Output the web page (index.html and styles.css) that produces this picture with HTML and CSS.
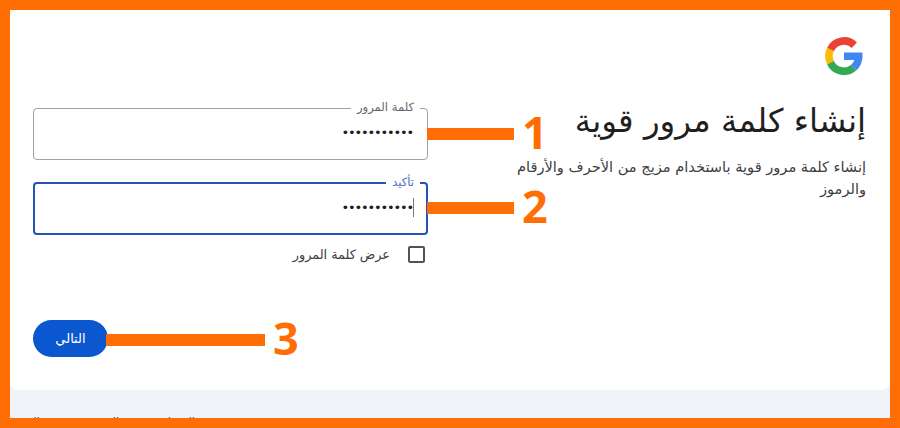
FILE: index.html
```
<!DOCTYPE html>
<html lang="ar" dir="rtl">
<head>
<meta charset="utf-8">
<title>إنشاء كلمة مرور قوية</title>
<link rel="stylesheet" href="styles.css">
</head>
<body>
<div class="frame">
  <main class="card">
    <section class="intro">
      <svg class="logo" viewBox="0 0 38 38" fill="none" stroke-width="7.6" aria-hidden="true">
        <path stroke="#4285f4" d="M19 19.2H33.7A14.8 14.8 0 0 1 28.6 30.6"/>
        <path stroke="#34a853" d="M5.3 25.2A14.8 14.8 0 0 0 28.6 30.6"/>
        <path stroke="#fbbc05" d="M5.6 12.3A15 15 0 0 0 5.6 25.7"/>
        <path stroke="#ea4335" d="M29.3 8.2A14.8 14.8 0 0 0 5.6 12.3"/>
      </svg>
      <h1 class="title">إنشاء كلمة مرور قوية</h1>
      <p class="lead">إنشاء كلمة مرور قوية باستخدام مزيج من الأحرف والأرقام والرموز</p>
    </section>
    <form class="form">
      <fieldset class="field">
        <legend>كلمة المرور</legend>
        <span class="dots">•••••••••••</span>
      </fieldset>
      <fieldset class="field focused">
        <legend>تأكيد</legend>
        <span class="caret"></span><span class="dots">•••••••••••</span>
      </fieldset>
      <label class="show"><span class="box"></span><span>عرض كلمة المرور</span></label>
      <button class="next" type="button">التالي</button>
    </form>
  </main>
  <footer class="footer">
    <span class="language">العربية</span>
    <nav class="links"><span>المساعدة</span><span>الخصوصية</span><span>البنود</span></nav>
  </footer>
  <div class="callout one"><i></i><b>1</b></div>
  <div class="callout two"><i></i><b>2</b></div>
  <div class="callout three"><i></i><b>3</b></div>
</div>
</body>
</html>
```

FILE: styles.css
```
* { box-sizing: border-box; }
body { margin: 0; font-family: "DejaVu Sans", sans-serif; color: #3c4043; }
.frame {
  position: relative;
  width: 900px;
  height: 428px;
  border: 10px solid #ff6d05;
  background: #f0f4f9;
  overflow: hidden;
}
.card {
  display: flex;
  justify-content: space-between;
  height: 380px;
  padding: 27px 24px 0 23px;
  background: #fff;
  border-radius: 0 0 8px 8px;
}
.intro { width: 358px; }
.logo { display: block; width: 38px; height: 38px; margin-right: 3px; }
.title {
  margin: 24px 0 0;
  font-size: 32.5px;
  font-weight: 400;
  line-height: 44px;
  color: #1f1f1f;
  white-space: nowrap;
}
.lead { margin: 13px 0 0; font-size: 14.6px; line-height: 22px; }
.form { width: 395px; padding-top: 62px; }
.field {
  display: flex;
  height: 61px;
  margin: 0 0 14px;
  padding: 0 14px 0 13px;
  border: 1px solid #a0a0a3;
  border-radius: 4px;
}
.field legend {
  height: 18px;
  margin-right: -7px;
  padding: 0 6px;
  font-size: 11.6px;
  line-height: 16px;
  color: #66686b;
}
.dots { margin-top: 6px; font: 13px/20px "DejaVu Sans", sans-serif; letter-spacing: -1.16px; color: #1f1f1f; }
.field.focused { border: 2px solid #2254b8; padding: 0 12px; }
.focused legend { margin-right: -6px; color: #4c6dc2; }
.caret { width: 1px; height: 19px; margin-top: 6px; background: #777; }
.show { display: flex; align-items: center; gap: 18px; height: 18px; margin: -4px 3px 0; font-size: 12.8px; }
.box { width: 17px; height: 17px; border: 2px solid #515357; border-radius: 2px; }
.next {
  display: block;
  width: 75px;
  height: 37px;
  margin: 57px auto 0 0;
  padding: 0;
  border: 0;
  border-radius: 19px;
  background: #0b57d0;
  color: #fff;
  font: 13px "DejaVu Sans", sans-serif;
}
.footer { display: flex; justify-content: space-between; padding-top: 24px; font-size: 11.6px; line-height: 16px; white-space: nowrap; }
.language { display: flex; justify-content: flex-end; width: 12px; margin-top: -2px; }
.links { display: grid; grid-template-columns: 76px 79px 30px; }
.callout { position: absolute; display: flex; align-items: center; direction: ltr; gap: 8px; height: 40px; color: #ff6d05; }
.callout i { width: 87px; height: 12px; background: currentColor; }
.callout b { margin-top: -4px; font: 700 45px/40px "Open Sans", sans-serif; }
.one { left: 417px; top: 104px; }
.two { left: 417px; top: 178px; }
.three { left: 96px; top: 310px; }
.three i { width: 159px; }
```
